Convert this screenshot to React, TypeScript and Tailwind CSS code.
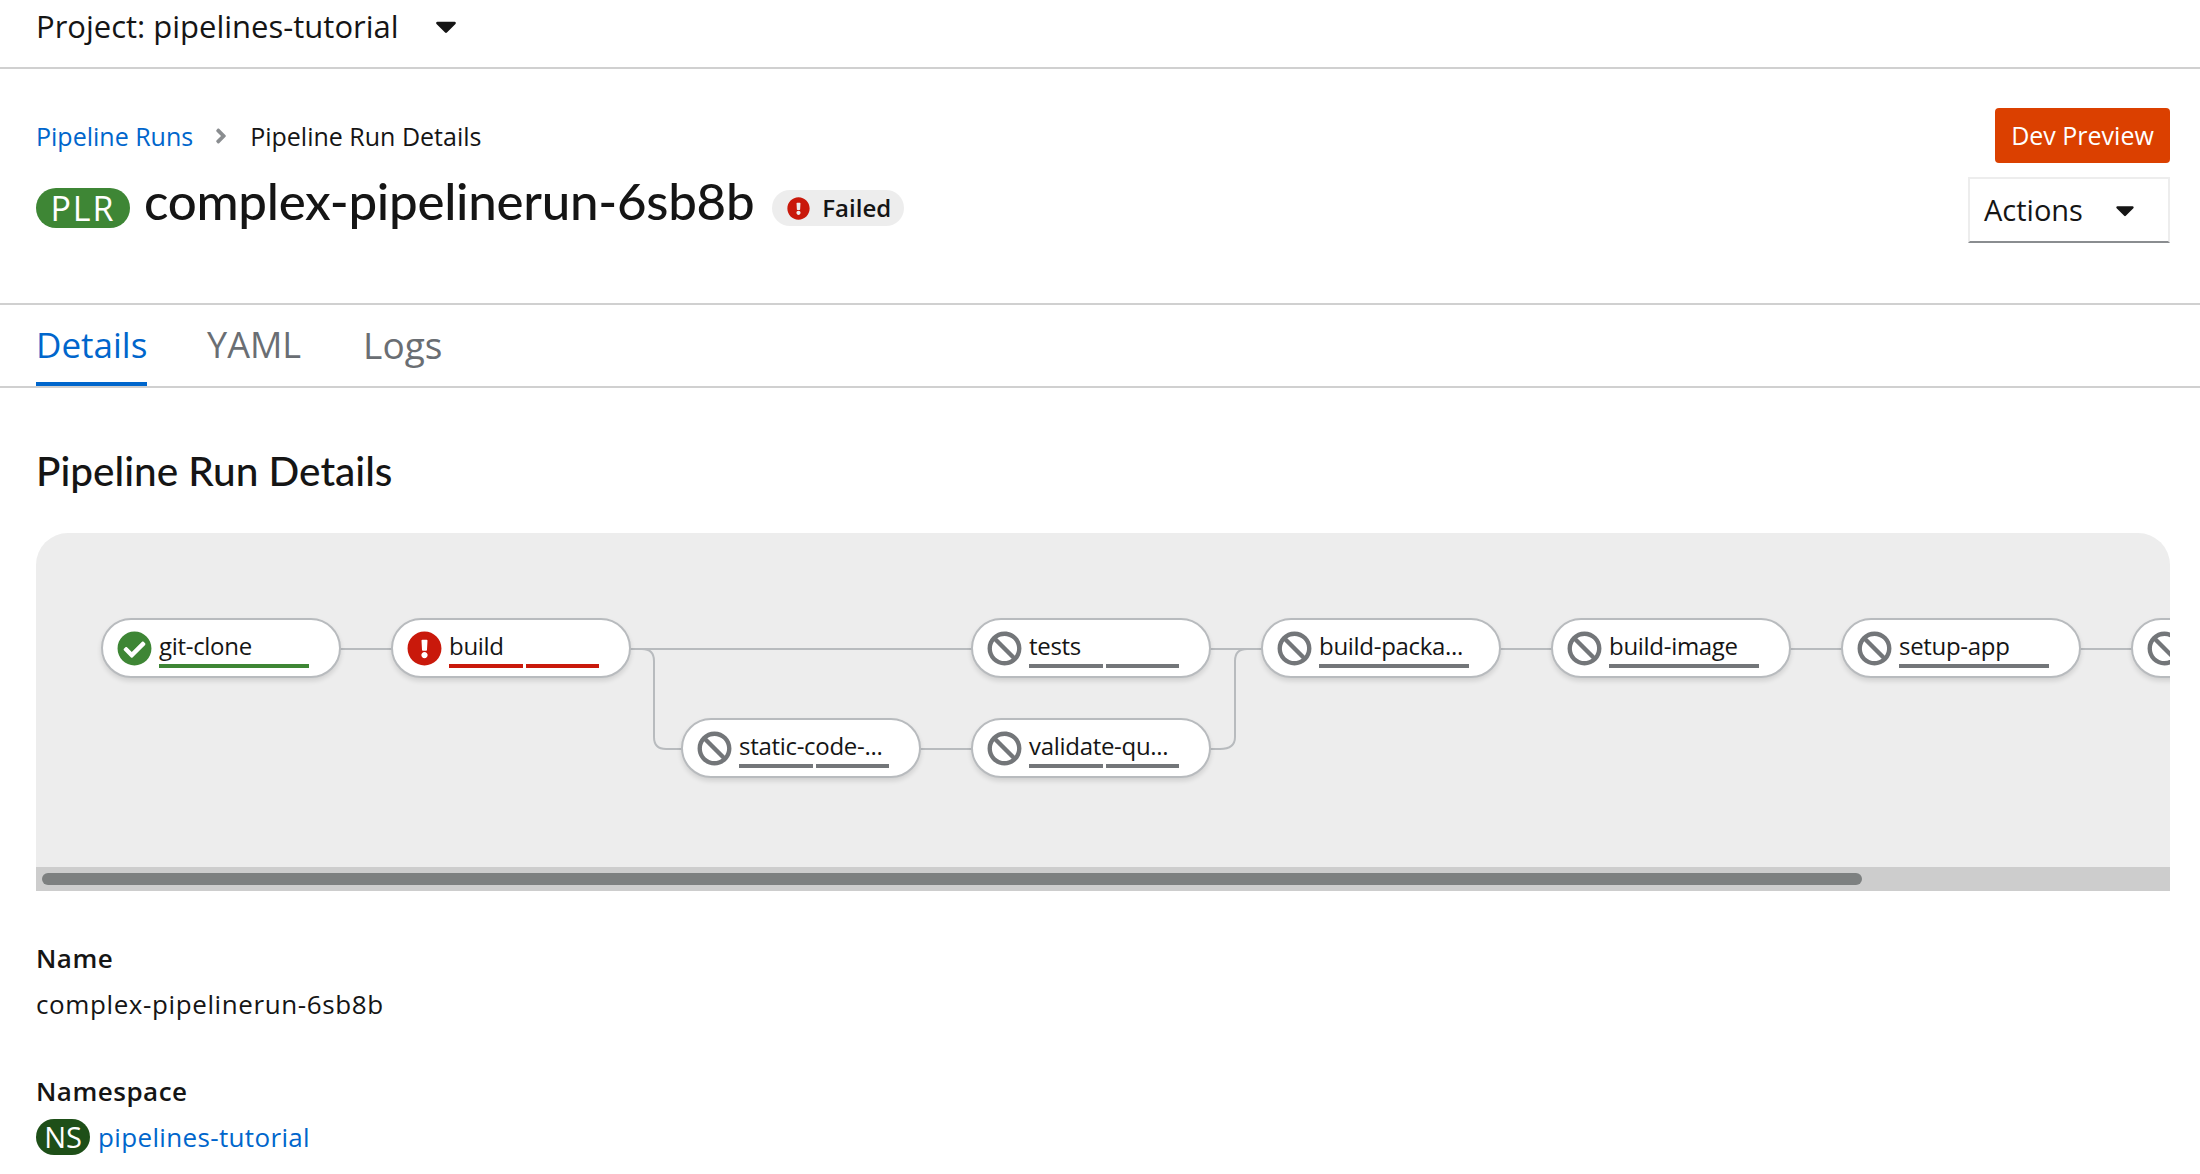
import { FaCaretDown, FaAngleRight, FaCheckCircle, FaExclamationCircle, FaBan } from "react-icons/fa";

type Kind = "ok" | "fail" | "skip";

const nodes: { label: string; x: number; y: number; kind: Kind; bars: number }[] = [
  { label: "git-clone", x: 65, y: 85, kind: "ok", bars: 1 },
  { label: "build", x: 355, y: 85, kind: "fail", bars: 2 },
  { label: "tests", x: 935, y: 85, kind: "skip", bars: 2 },
  { label: "static-code-...", x: 645, y: 185, kind: "skip", bars: 2 },
  { label: "validate-qu...", x: 935, y: 185, kind: "skip", bars: 2 },
  { label: "build-packa...", x: 1225, y: 85, kind: "skip", bars: 1 },
  { label: "build-image", x: 1515, y: 85, kind: "skip", bars: 1 },
  { label: "setup-app", x: 1805, y: 85, kind: "skip", bars: 1 },
  { label: "", x: 2095, y: 85, kind: "skip", bars: 1 },
];

function NodeIcon({ kind }: { kind: Kind }) {
  if (kind === "ok") return <FaCheckCircle className="text-[#3e8635] text-[35px] shrink-0" />;
  if (kind === "fail") return <FaExclamationCircle className="text-[#c9190b] text-[35px] shrink-0" />;
  return <FaBan className="text-[#737679] text-[35px] shrink-0" />;
}

function Node({ label, x, y, kind, bars }: (typeof nodes)[number]) {
  const bar = kind === "ok" ? "bg-[#3e8635]" : kind === "fail" ? "bg-[#c9190b]" : "bg-[#737679]";
  return (
    <div
      className="absolute w-[240px] h-[60px] rounded-[30px] border-2 border-[#b8bbbe] bg-white shadow-[0_3px_5px_rgba(0,0,0,0.12)] flex items-center pl-[14px]"
      style={{ left: x, top: y }}
    >
      <NodeIcon kind={kind} />
      <div className="relative ml-[7px] w-[150px] h-[56px]">
        <div className="absolute left-0 top-[12px] text-[24px] leading-[28px] text-[#151515] whitespace-nowrap tracking-[-0.3px]">{label}</div>
        <div className="absolute left-0 right-0 top-[44px] h-[4px] flex gap-[3px]">
          {Array.from({ length: bars }).map((_, i) => (
            <div key={i} className={`flex-1 ${bar}`} />
          ))}
        </div>
      </div>
    </div>
  );
}

export default function App() {
  return (
    <div className="w-[2200px] h-[1174px] overflow-hidden bg-white text-[#151515] font-['Open_Sans',sans-serif]">
      <div className="h-[69px] border-b-2 border-[#d0d0d0] px-9 flex items-start pt-[7px]">
        <span className="text-[31px] leading-[38px]">Project: pipelines-tutorial</span>
        <FaCaretDown className="text-[34px] ml-[30px] mt-[2px]" />
      </div>

      <div className="h-[236px] border-b-2 border-[#d0d0d0] pl-9 pr-[30px] flex justify-between">
        <div>
          <div className="flex items-center h-[32px] mt-[51px] text-[25px] leading-[32px]">
            <span className="text-[#0066cc]">Pipeline Runs</span>
            <FaAngleRight className="text-[#8a8d90] text-[24px] ml-[16px] mr-[17px]" />
            <span>Pipeline Run Details</span>
          </div>
          <div className="flex items-center mt-[36px]">
            <span className="w-[94px] h-[40px] rounded-[20px] bg-[#3e8635] text-white text-[34px] leading-[40px] tracking-[2px] text-center">PLR</span>
            <h1 className="ml-[14px] h-[40px] text-[51px] leading-[26px] tracking-[-0.26px] font-medium font-['Lato',sans-serif]">complex-pipelinerun-6sb8b</h1>
            <span className="ml-[18px] w-[132px] h-[36px] rounded-[18px] bg-[#ededed] flex items-center pl-[15px] text-[24px] font-semibold">
              <FaExclamationCircle className="text-[#c9190b] text-[23px] mr-[12px]" />
              Failed
            </span>
          </div>
        </div>
        <div className="flex flex-col items-end pt-[39px]">
          <div className="w-[175px] h-[55px] rounded-[4px] bg-[#db4000] text-white text-[25px] flex items-center justify-center">Dev Preview</div>
          <div className="mt-[14px] w-[202px] h-[66px] border-2 border-[#ededed] border-b-[#8a8d90] flex items-center pl-[14px] text-[29px]">
            Actions
            <FaCaretDown className="text-[30px] ml-[27px]" />
          </div>
        </div>
      </div>

      <div className="h-[83px] border-b-2 border-[#d0d0d0] pl-9 flex">
        <div className="relative w-[111px] pt-[16px] text-[#0066cc] text-[35px] leading-[48px]">
          Details
          <div className="absolute left-0 right-0 bottom-0 h-[4px] bg-[#0066cc]" />
        </div>
        <div className="ml-[60px] pt-[16px] text-[#6a6e73] text-[36px] leading-[48px]">YAML</div>
        <div className="ml-[62px] pt-[16px] text-[#6a6e73] text-[37px] leading-[48px]">Logs</div>
      </div>

      <div className="pl-9 pr-[30px]">
        <h2 className="mt-[60px] text-[40.5px] leading-[46px] font-medium font-['Lato',sans-serif]">Pipeline Run Details</h2>

        <div className="mt-[39px] h-[358px] rounded-t-[32px] bg-[#ededed] overflow-hidden flex flex-col">
          <div className="relative flex-1 overflow-hidden">
            <svg className="absolute inset-0" width="2134" height="334" fill="none" stroke="#b8bbbe" strokeWidth="2">
              <path d="M300 116H360" />
              <path d="M590 116H940" />
              <path d="M590 116H606Q618 116 618 128V204Q618 216 630 216H650" />
              <path d="M880 216H940" />
              <path d="M1170 116H1230" />
              <path d="M1170 216H1184Q1199 216 1199 204V128Q1199 116 1211 116" />
              <path d="M1460 116H1520" />
              <path d="M1750 116H1810" />
              <path d="M2040 116H2100" />
            </svg>
            {nodes.map((n) => (
              <Node key={n.x + "-" + n.y} {...n} />
            ))}
          </div>
          <div className="h-[24px] bg-[#cdcdcd] flex items-center pl-[6px]">
            <div className="w-[1820px] h-[12px] rounded-[6px] bg-[#7d8080]" />
          </div>
        </div>

        <div className="mt-[50px] text-[26px] leading-[34px] font-semibold tracking-[0.5px]">Name</div>
        <div className="mt-[12px] text-[26px] leading-[34px] tracking-[0.6px]">complex-pipelinerun-6sb8b</div>
        <div className="mt-[53px] text-[26px] leading-[34px] font-semibold tracking-[0.5px]">Namespace</div>
        <div className="mt-[11px] flex items-center">
          <span className="w-[54px] h-[36px] rounded-[18px] bg-[#1e4f18] text-white text-[29px] leading-[36px] text-center">NS</span>
          <span className="ml-[8px] text-[26px] leading-[34px] tracking-[0.35px] text-[#0066cc]">pipelines-tutorial</span>
        </div>
      </div>
    </div>
  );
}
